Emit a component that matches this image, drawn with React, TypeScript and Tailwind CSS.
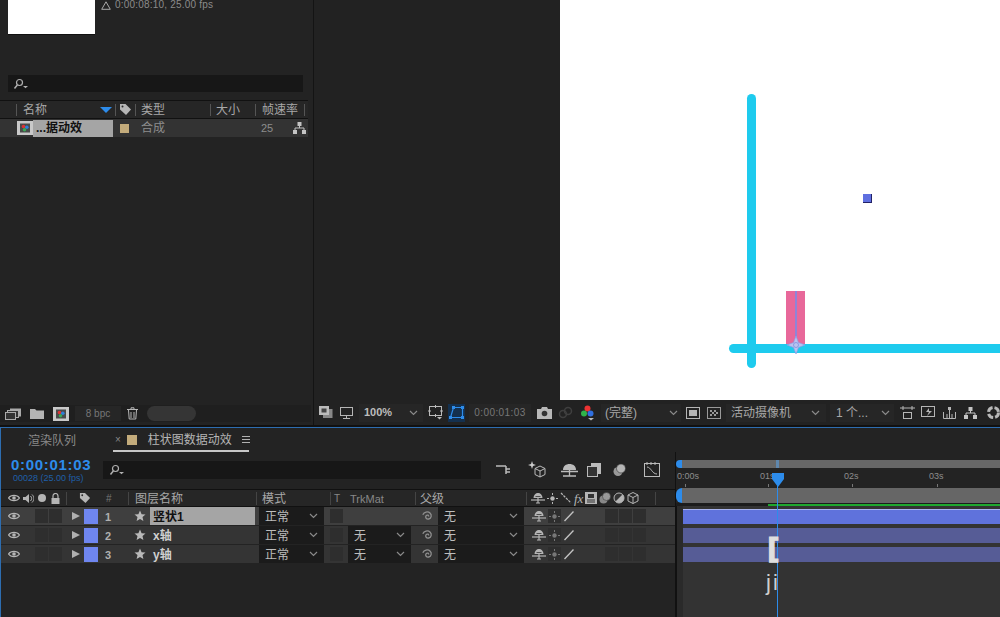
import type { ReactNode } from "react";

const font = "font-['Liberation_Sans','Noto_Sans_CJK_SC',sans-serif]";

function Chevron({ className = "" }: { className?: string }) {
  return (
    <svg width="9" height="6" viewBox="0 0 9 6" className={className}>
      <path d="M1 1l3.5 3.5L8 1" fill="none" stroke="#8a8a8a" strokeWidth="1.2" />
    </svg>
  );
}

function SearchIcon() {
  return (
    <svg width="16" height="12" viewBox="0 0 16 12">
      <circle cx="6.5" cy="4.5" r="3" fill="none" stroke="#b0b0b0" strokeWidth="1.2" />
      <path d="M4.3 7L1.5 10.5" stroke="#b0b0b0" strokeWidth="1.5" />
      <path d="M10 8h5l-2.5 2.2z" fill="#b0b0b0" />
    </svg>
  );
}

function CompIcon() {
  return (
    <svg width="16" height="14" viewBox="0 0 16 14">
      <rect x="0" y="0" width="16" height="14" fill="#c9c9c9" />
      <rect x="3" y="2.500" width="10" height="9" fill="#4a4a4a" />
      <circle cx="6.500" cy="5.500" r="1.800" fill="#d33" />
      <circle cx="9.800" cy="6.200" r="1.800" fill="#2f7fd8" />
      <circle cx="7.500" cy="8.800" r="1.800" fill="#3aa655" />
    </svg>
  );
}

function Eye() {
  return (
    <svg width="12" height="8" viewBox="0 0 12 8">
      <path d="M.5 4C3 .5 9 .5 11.500 4 9 7.500 3 7.500.5 4z" fill="none" stroke="#b5b5b5" strokeWidth="1.200" />
      <circle cx="6" cy="4" r="1.800" fill="#b5b5b5" />
    </svg>
  );
}

function Star() {
  return (
    <svg width="12" height="12" viewBox="0 0 12 12">
      <path d="M6 .5l1.600 3.700 3.900.3-3 2.600.9 3.900L6 8.900l-3.400 2.100.9-3.900-3-2.600 3.900-.3z" fill="#b9b9b9" />
    </svg>
  );
}

function Spiral() {
  return (
    <svg width="14" height="14" viewBox="0 0 14 14">
      <path d="M7.500 7.500c.8-1.200-1.500-2-2.500-.6-1.100 1.600.6 3.600 2.700 3.100 2.700-.6 3.300-4 1.500-5.800C6.900 2 3 2.800 1.800 5.800" fill="none" stroke="#8f8f8f" strokeWidth="1.300" />
    </svg>
  );
}

function Shy() {
  return (
    <svg width="14" height="12" viewBox="0 0 14 12">
      <path d="M2.500 6C2.500 3 4.500 1 7 1s4.500 2 4.500 5z" fill="#b5b5b5" />
      <path d="M0 8h14" stroke="#b5b5b5" strokeWidth="1.200" />
      <path d="M7 1v10M5 11h4" stroke="#b5b5b5" strokeWidth="1.200" />
      <path d="M4.500 4.500h5" stroke="#333" strokeWidth=".8" />
    </svg>
  );
}

function Sun({ color = "#777" }: { color?: string }) {
  return (
    <svg width="11" height="11" viewBox="0 0 11 11">
      <circle cx="5.500" cy="5.500" r="2.200" fill={color} />
      <path d="M5.500 0v2M5.500 9v2M0 5.500h2M9 5.500h2" stroke={color} strokeWidth="1" />
    </svg>
  );
}

function Slash() {
  return (
    <svg width="12" height="12" viewBox="0 0 12 12">
      <path d="M1.500 11L10.500 1.500" stroke="#c4c4c4" strokeWidth="1.300" />
    </svg>
  );
}

function Tag({ size = 13 }: { size?: number }) {
  return (
    <svg width={size} height={size} viewBox="0 0 13 13">
      <path d="M1 1h5.500L12 6.500 7 12 1 6.500z" fill="#b5b5b5" />
      <circle cx="3.500" cy="3.500" r="1" fill="#2a2a2a" />
    </svg>
  );
}

function Drop({ w, label, ml = "" }: { w: string; label: string; ml?: string }) {
  return (
    <div className={`${w} ${ml} h-[18px] bg-[#1b1b1b] flex items-center justify-between px-[6px] text-[12px] shrink-0 text-[#bdbdbd]`}>
      <span className="truncate pt-[2px]">{label}</span>
      <Chevron />
    </div>
  );
}

function Cell({ ml = "" }: { ml?: string }) {
  return <div className={`w-[13px] h-[14px] bg-[#2e2e2e] shrink-0 ${ml}`} />;
}

function ProjectPanel() {
  return (
    <div className="w-[311px] shrink-0 flex flex-col bg-[#232323]">
      <div className="h-[36px] flex pl-[8px]">
        <div className="w-[87px] h-[35px] bg-white border-b border-[#111]" />
        <div className="ml-[6px] flex items-center h-[10px] gap-[4px] text-[10px] leading-[10px] text-[#8b8b8b]">
          <svg width="10" height="9" viewBox="0 0 10 9">
            <path d="M5 .8L9.300 8.300H.7z" fill="none" stroke="#aaa" strokeWidth="1" />
          </svg>
          <span className="tracking-[0.2px]">0:00:08:10, 25.00 fps</span>
        </div>
      </div>
      <div className="mt-[39px] mx-[8px] h-[17px] bg-[#171717] flex items-center pl-[5px]">
        <SearchIcon />
      </div>
      <div className="mt-[8px] mr-[3px] h-[19px] border-t border-[#111] border-b flex items-center text-[12px] text-[#a8a8a8] bg-[#262626]">
        <div className="ml-[16px] h-[12px] w-[100px] border-l border-r border-[#555] pl-[6px] pr-[3px] flex items-center justify-between leading-none">
          <span>名称</span>
          <svg width="12" height="6" viewBox="0 0 12 6">
            <path d="M0 0h12L6 6z" fill="#2d8ceb" />
          </svg>
        </div>
        <div className="w-[19px] flex justify-center">
          <Tag />
        </div>
        <div className="h-[12px] w-[76px] border-l border-r border-[#555] pl-[5px] leading-none flex items-center">类型</div>
        <div className="h-[12px] w-[45px] border-r border-[#555] pl-[5px] leading-none flex items-center">大小</div>
        <div className="h-[12px] w-[49px] border-r border-[#555] pl-[6px] leading-none flex items-center">帧速率</div>
      </div>
      <div className="h-[18px] mr-[3px] flex items-center bg-[#333] text-[11px] text-[#8d8d8d]">
        <div className="ml-[17px]">
          <CompIcon />
        </div>
        <div className="w-[80px] h-[17px] bg-[#a5a5a5] text-[#111] font-bold text-[12px] pl-[3px] leading-[17px]">...据动效</div>
        <div className="ml-[7px] w-[9px] h-[9px] bg-[#c3ab7b]" />
        <div className="ml-[12px] w-[120px] text-[12px]">合成</div>
        <div className="w-[32px]">25</div>
        <svg width="13" height="12" viewBox="0 0 13 12">
          <path d="M4.500 0h4v4h-4zM0 8h4v4H0zM9 8h4v4H9z" fill="#c4c4c4" />
          <path d="M6.500 4v2M2 8V6h9v2" stroke="#c4c4c4" fill="none" />
        </svg>
      </div>
      <div className="flex-1" />
      <div className="h-[17px] mb-[3px] flex items-center pl-[5px] bg-[#1f1f1f] text-[#777]">
        <svg width="17" height="12" viewBox="0 0 17 12">
          <rect x="5" y="0.500" width="11" height="8" fill="#aaa" />
          <rect x="2.500" y="2.500" width="11" height="7" fill="#333" stroke="#aaa" />
          <rect x="0.500" y="4.500" width="10" height="7" fill="#333" stroke="#aaa" />
        </svg>
        <svg width="15" height="11" viewBox="0 0 15 11" className="ml-[8px]">
          <path d="M0 1h5l1.500 1.500H14V11H0z" fill="#b3b3b3" />
        </svg>
        <div className="ml-[8px]">
          <CompIcon />
        </div>
        <div className="ml-[6px] w-[46px] h-[15px] bg-[#262626] text-[10px] leading-[15px] text-center">8 bpc</div>
        <svg width="11" height="13" viewBox="0 0 11 13" className="ml-[6px]">
          <path d="M0 2.500h11M4 2.500V.8h3v1.700M1.500 3l.7 9h6.600l.7-9M4 5v6M7 5v6" fill="none" stroke="#b8b8b8" />
        </svg>
        <div className="ml-[9px] w-[49px] h-[15px] rounded-full bg-[#353535]" />
      </div>
    </div>
  );
}

function Viewer() {
  return (
    <div className="flex-1 ml-[2px] flex flex-col border-l border-[#141414] bg-[#232323]">
      <div className="h-[400px] flex">
        <div className="w-[246px] bg-[#222222]" />
        <div className="flex-1 bg-white relative overflow-hidden">
          <div className="absolute left-[187px] top-[94px] w-[9px] h-[274px] rounded-full bg-[#1ecbee]" />
          <div className="absolute left-[226px] top-[291px] w-[19px] h-[56px] bg-[#e8689a]" />
          <div className="absolute left-[169px] top-[344px] w-[300px] h-[9px] rounded-full bg-[#1ecbee]" />
          <div className="absolute left-[235px] top-[291px] w-[2px] h-[50px] bg-[#8f84d8]" />
          <svg width="18" height="18" viewBox="0 0 18 18" className="absolute left-[227px] top-[336px]">
            <path d="M9 0L11.500 6.500 18 9l-6.500 2.500L9 18l-2.500-6.500L0 9l6.500-2.500z" fill="#b9c4f0" stroke="#8c9be4" strokeWidth=".7" />
            <circle cx="9" cy="9" r="2.500" fill="none" stroke="#7f8fe0" strokeWidth=".8" />
          </svg>
          <div className="absolute left-[303px] top-[194px] w-[9px] h-[9px] bg-[#5f6fe0] border-b border-r border-[#222266]" />
        </div>
      </div>
      <div className="h-[25px] flex items-center text-[11px] text-[#8e8e8e] bg-[#222222]">
        <svg width="14" height="13" viewBox="0 0 14 13" className="ml-[5px]">
          <rect x="4" y="3" width="9.500" height="9" fill="#888" />
          <rect x="0.500" y="0.500" width="9" height="8" fill="#bbb" stroke="#bbb" />
          <rect x="2.500" y="2.500" width="5" height="4" fill="#444" />
        </svg>
        <svg width="13" height="12" viewBox="0 0 13 12" className="ml-[7px]">
          <rect x="0.500" y="0.500" width="12" height="8" fill="none" stroke="#b5b5b5" />
          <path d="M6.500 9v2M3 11.500h7" stroke="#b5b5b5" />
        </svg>
        <div className="ml-[6px] w-[64px] h-[18px] bg-[#262626] flex items-center justify-between px-[5px] text-[#bdbdbd] font-bold">
          <span>100%</span>
          <Chevron />
        </div>
        <svg width="15" height="15" viewBox="0 0 15 15" className="ml-[5px]">
          <rect x="1.500" y="1.500" width="12" height="9" fill="none" stroke="#bbb" />
          <path d="M7.500 0v3M7.500 9v3M0 6h3M12 6h3" stroke="#bbb" />
          <path d="M9 12h5l-2.500 2.500z" fill="#bbb" />
        </svg>
        <div className="ml-[5px] w-[17px] h-[18px] bg-[#14304e] flex items-center justify-center">
          <svg width="15" height="14" viewBox="0 0 15 14">
            <path d="M4.500 1.500h9v10h-12z" fill="none" stroke="#2d8ceb" strokeWidth="1.200" />
            <path d="M3 0h3v3H3zM12 0h3v3h-3zM0 10h3v3H0zM12 10h3v3h-3z" fill="#2d8ceb" />
          </svg>
        </div>
        <div className="ml-[4px] w-[62px] h-[18px] bg-[#262626] flex items-center justify-center text-[10px] tracking-[0.4px] text-[#777]">0:00:01:03</div>
        <svg width="15" height="12" viewBox="0 0 15 12" className="ml-[6px]">
          <path d="M0 2h4l1-2h5l1 2h4v10H0z" fill="#b8b8b8" />
          <circle cx="7.500" cy="6.500" r="2.800" fill="#333" />
        </svg>
        <svg width="15" height="14" viewBox="0 0 15 14" className="ml-[6px]">
          <circle cx="5" cy="8" r="3.500" fill="none" stroke="#3f3f3f" strokeWidth="1.500" />
          <circle cx="10" cy="5" r="3.500" fill="none" stroke="#3f3f3f" strokeWidth="1.500" />
        </svg>
        <svg width="15" height="16" viewBox="0 0 15 16" className="ml-[7px]">
          <circle cx="7.500" cy="3.500" r="3" fill="#e33" />
          <circle cx="4" cy="8.500" r="3" fill="#2fb34a" />
          <circle cx="10.500" cy="8.500" r="3" fill="#2f6fe0" />
          <path d="M8 13h6l-3 2.500z" fill="#bbb" />
        </svg>
        <div className="ml-[6px] w-[80px] h-[18px] bg-[#262626] flex items-center justify-between px-[4px] pr-[3px] text-[12px] text-[#a8a8a8]">
          <span>(完整)</span>
          <Chevron />
        </div>
        <svg width="14" height="12" viewBox="0 0 14 12" className="ml-[5px]">
          <rect x="0.500" y="0.500" width="13" height="11" fill="none" stroke="#b5b5b5" />
          <rect x="3" y="3" width="8" height="6" fill="#b5b5b5" />
        </svg>
        <svg width="14" height="12" viewBox="0 0 14 12" className="ml-[7px]">
          <rect x="0.500" y="0.500" width="13" height="11" fill="none" stroke="#999" />
          <path d="M3 3h2v2H3zM7 3h2v2H7zM5 5h2v2H5zM9 5h2v2H9zM3 7h2v2H3zM7 7h2v2H7z" fill="#999" />
        </svg>
        <div className="ml-[5px] w-[100px] h-[18px] bg-[#262626] flex items-center justify-between pl-[5px] pr-[6px] text-[12px] text-[#a8a8a8]">
          <span>活动摄像机</span>
          <Chevron />
        </div>
        <div className="ml-[4px] w-[64px] h-[18px] bg-[#262626] flex items-center justify-between pl-[6px] pr-[4px] text-[12px] text-[#a8a8a8]">
          <span>1 个...</span>
          <Chevron />
        </div>
        <svg width="15" height="13" viewBox="0 0 15 13" className="ml-[6px]">
          <path d="M0 2h15M3 0v4M12 0v4" stroke="#b5b5b5" />
          <rect x="3.500" y="6.500" width="8" height="6" fill="none" stroke="#b5b5b5" />
        </svg>
        <svg width="14" height="13" viewBox="0 0 14 13" className="ml-[6px]">
          <rect x="0.500" y="0.500" width="13" height="10" fill="none" stroke="#b5b5b5" />
          <path d="M8 2L5 6h3l-2 4 5-5H8z" fill="#b5b5b5" />
        </svg>
        <svg width="13" height="12" viewBox="0 0 13 12" className="ml-[8px]">
          <path d="M.5 5v6.500h12V5M4 11V7M6.500 11V3M9 11V7" fill="none" stroke="#b5b5b5" />
          <rect x="5" y="0" width="3" height="3" fill="#b5b5b5" />
        </svg>
        <svg width="13" height="12" viewBox="0 0 13 12" className="ml-[8px]">
          <path d="M4.500 0h4v4h-4zM0 8h4v4H0zM9 8h4v4H9z" fill="#c4c4c4" />
          <path d="M6.500 4v2M2 8V6h9v2" stroke="#c4c4c4" fill="none" />
        </svg>
        <svg width="15" height="15" viewBox="0 0 15 15" className="ml-[9px] shrink-0">
          <circle cx="7.500" cy="7.500" r="5" fill="none" stroke="#b8b8b8" strokeWidth="3" strokeDasharray="6 2" />
        </svg>
      </div>
    </div>
  );
}

const HeadSep = ({ w, children, pl = "pl-[5px]" }: { w: string; children?: ReactNode; pl?: string }) => (
  <div className={`${w} ${pl} pt-[2px] h-[13px] border-r border-[#444] flex items-center shrink-0 leading-none`}>{children}</div>
);

function LayerRow({ n, name, selected }: { n: number; name: string; selected?: boolean }) {
  return (
    <div className={`h-[18px] mb-px flex items-center text-[12px] text-[#c4c4c4] ${selected ? "bg-[#3f3f3f]" : "bg-[#343434]"}`}>
      <div className="ml-[7px] w-[14px] flex items-center">
        <Eye />
      </div>
      <Cell ml="ml-[13px]" />
      <Cell ml="ml-px" />
      <svg width="8" height="8" viewBox="0 0 8 8" className="ml-[10px]">
        <path d="M0 0l8 4-8 4z" fill="#b0b0b0" />
      </svg>
      <div className="ml-[4px] w-[14px] h-[15px] bg-[#6f86f0]" />
      <div className="w-[36px] pl-[7px] pt-[2px] font-bold text-[11px] text-[#b0b0b0]">{n}</div>
      <Star />
      <div className={`ml-[4px] w-[105px] h-[18px] pl-[3px] leading-[20px] font-bold ${selected ? "bg-[#a5a5a5] text-[#111]" : "text-[#cfcfcf]"}`}>{name}</div>
      <Drop w="w-[65px]" label="正常" ml="ml-[4px]" />
      <Cell ml="ml-[6px]" />
      {selected ? <div className="w-[68px] shrink-0" /> : <Drop w="w-[63px]" label="无" ml="ml-[5px]" />}
      <div className="ml-[10px] w-[14px] flex">
        <Spiral />
      </div>
      <Drop w="w-[86px]" label="无" ml="ml-[3px]" />
      <div className="ml-[8px] w-[14px] flex">
        <Shy />
      </div>
      <div className="ml-[2px] w-[13px] h-[14px] bg-[#2e2e2e] flex items-center justify-center">
        <Sun />
      </div>
      <div className="ml-[2px] w-[13px] flex">
        <Slash />
      </div>
      <Cell ml="ml-[29px]" />
      <Cell ml="ml-px" />
      <Cell ml="ml-px" />
    </div>
  );
}

function LayerPanel() {
  return (
    <div className="w-[675px] shrink-0 flex flex-col border-r border-[#111]">
      <div className="h-[35px] flex items-start">
        <div className="pl-[10px] pt-[4px] w-[102px] shrink-0">
          <div className="text-[15px] leading-[17px] font-bold text-[#2d8ceb] tracking-[0.7px]">0:00:01:03</div>
          <div className="text-[9px] leading-[10px] text-[#1f5fa8] pl-[2px]">00028 (25.00 fps)</div>
        </div>
        <div className="mt-[9px] w-[378px] h-[18px] bg-[#171717] flex items-center pl-[6px]">
          <SearchIcon />
        </div>
        <div className="mt-[9px] flex items-center">
          <svg width="16" height="14" viewBox="0 0 16 14" className="ml-[15px]">
            <path d="M0 3h6M5 3h5M10 3v8M10 6h4M10 9h4" stroke="#bbb" strokeWidth="1.500" fill="none" />
          </svg>
          <svg width="18" height="17" viewBox="0 0 18 17" className="ml-[16px]">
            <path d="M4 0l1 3 3 1-3 1-1 3-1-3-3-1 3-1z" fill="#ccc" />
            <path d="M12 5l5 2.500v6L12 16l-5-2.500v-6zM7 7.500l5 2.500 5-2.500M12 10v6" fill="none" stroke="#bbb" />
          </svg>
          <svg width="17" height="14" viewBox="0 0 17 14" className="ml-[15px]">
            <path d="M2 7C2 3 5 1 8.500 1S15 3 15 7z" fill="#bbb" />
            <path d="M0 8.500h17M8.500 1v12M2 13h13" stroke="#bbb" strokeWidth="1.300" />
          </svg>
          <svg width="14" height="14" viewBox="0 0 14 14" className="ml-[9px]">
            <rect x="4" y="0" width="10" height="11" fill="#bbb" />
            <rect x="0.500" y="3.500" width="10" height="10" fill="#333" stroke="#bbb" />
          </svg>
          <svg width="15" height="14" viewBox="0 0 15 14" className="ml-[11px]">
            <circle cx="6" cy="8.500" r="4.500" fill="#999" />
            <circle cx="9" cy="5.500" r="4.500" fill="#b5b5b5" stroke="#333" strokeWidth=".6" />
          </svg>
          <svg width="16" height="15" viewBox="0 0 16 15" className="ml-[17px]">
            <rect x="0.500" y="1.500" width="15" height="13" fill="none" stroke="#bbb" />
            <path d="M3 5c4 0 5 7 10 7M3 0v3M7 0v3M11 0v3" fill="none" stroke="#bbb" />
          </svg>
        </div>
      </div>
      <div className="mt-[2px] h-[18px] border-t border-b border-[#111] flex items-center text-[12px] text-[#a8a8a8] bg-[#262626]">
        <div className="pl-[7px] flex items-center gap-[3px] w-[66px] h-[13px] border-r border-[#444] shrink-0">
          <Eye />
          <svg width="11" height="11" viewBox="0 0 11 11">
            <path d="M0 4h2.500L6 1v9L2.500 7H0z" fill="#b5b5b5" />
            <path d="M7.500 3c1.500 1.500 1.500 3.500 0 5M9 1.500c2.500 2.500 2.500 5.500 0 8" fill="none" stroke="#b5b5b5" />
          </svg>
          <div className="w-[8px] h-[8px] rounded-full bg-[#b5b5b5] ml-[1px]" />
          <svg width="9" height="11" viewBox="0 0 9 11" className="ml-[2px]">
            <path d="M2 5V3a2.500 2.500 0 015 0v2" fill="none" stroke="#b5b5b5" strokeWidth="1.200" />
            <rect x="0.500" y="5" width="8" height="6" fill="#b5b5b5" />
          </svg>
        </div>
        <div className="w-[31px] pl-[12px] shrink-0 flex">
          <Tag size={12} />
        </div>
        <HeadSep w="w-[31px]" pl="pl-[8px]">
          <span className="text-[10px] text-[#777]">#</span>
        </HeadSep>
        <HeadSep w="w-[128px]" pl="pl-[6px]">图层名称</HeadSep>
        <HeadSep w="w-[74px]" pl="pl-[5px]">模式</HeadSep>
        <div className="w-[14px] pl-[3px] text-[10px] text-[#888] shrink-0">T</div>
        <HeadSep w="w-[71px]" pl="pl-[5px]">
          <span className="text-[11px] text-[#888]">TrkMat</span>
        </HeadSep>
        <HeadSep w="w-[111px]" pl="pl-[4px]">父级</HeadSep>
        <div className="pl-[4px] flex items-center gap-[2px] shrink-0">
          <Shy />
          <Sun color="#b5b5b5" />
          <svg width="12" height="12" viewBox="0 0 12 12">
            <path d="M1 1l10 10" stroke="#b5b5b5" strokeWidth="1.200" strokeDasharray="2.500 1" />
          </svg>
          <span className="italic font-['Liberation_Serif',serif] text-[13px] leading-none text-[#b5b5b5]">fx</span>
          <svg width="12" height="12" viewBox="0 0 12 12">
            <rect width="12" height="12" fill="#b5b5b5" />
            <rect x="3" y="2" width="6" height="4" fill="#333" />
            <path d="M2 8h8M2 10h8" stroke="#333" />
          </svg>
          <svg width="12" height="12" viewBox="0 0 12 12">
            <circle cx="4.500" cy="7.500" r="4" fill="#888" />
            <circle cx="7.500" cy="4.500" r="4" fill="#999" stroke="#333" strokeWidth=".5" />
          </svg>
          <svg width="12" height="12" viewBox="0 0 12 12">
            <circle cx="6" cy="6" r="5" fill="#333" stroke="#b5b5b5" />
            <path d="M6 1a5 5 0 010 10z" fill="#b5b5b5" transform="rotate(45 6 6)" />
          </svg>
          <svg width="12" height="12" viewBox="0 0 12 12">
            <path d="M6 .5l5 2.500v6L6 11.500 1 9V3zM1 3l5 2.500L11 3M6 5.500v6" fill="none" stroke="#b5b5b5" />
          </svg>
          <div className="ml-[14px] w-px h-[13px] bg-[#444]" />
        </div>
      </div>
      <LayerRow n={1} name="竖状1" selected />
      <LayerRow n={2} name="x轴" />
      <LayerRow n={3} name="y轴" />
      <div className="flex-1" />
    </div>
  );
}

function TimelinePanel() {
  return (
    <div className="flex-1 flex flex-col relative overflow-hidden">
      <div className="h-[16px] pt-[8px] flex">
        <div className="w-[6px] h-[8px] bg-[#2d8ceb] rounded-l-full" />
        <div className="flex-1 h-[8px] bg-[#676767] relative">
          <div className="absolute left-[94px] top-0 w-[3px] h-[8px] bg-[#5f87ad]" />
        </div>
      </div>
      <div className="h-[20px] flex items-start text-[9px] leading-[11px] text-[#8e8e8e] pt-[3px]">
        {[
          ["0:00s", "w-[84px] pl-[1px]"],
          ["01s", "w-[84px] pl-0"],
          ["02s", "w-[85px] pl-0"],
          ["03s", "w-[60px] pl-0"],
        ].map(([label, cls]) => (
          <div key={label} className={`${cls} shrink-0`}>
            <div>{label}</div>
            <div className="ml-[8px] mt-[2px] w-px h-[3px] bg-[#777]" />
          </div>
        ))}
      </div>
      <div className="h-[15px] flex">
        <div className="w-[6px] bg-[#2d8ceb] rounded-l-full" />
        <div className="flex-1 bg-[#666]" />
      </div>
      <div className="h-[3px] bg-[#1c1c1c] flex items-center">
        <div className="ml-[92px] flex-1 h-[2px] bg-[#1fa82e]" />
      </div>
      <div className="flex-1 flex bg-[#333333]">
        <div className="w-[7px] bg-[#2a2a2a] border-l border-[#111]" />
        <div className="flex-1 pt-[3px]">
          <div className="h-[15px] border-t border-[#a9b4ee] bg-[#5f72dc]" />
          <div className="mt-[4px] h-[15px] bg-[#565c96]" />
          <div className="mt-[4px] h-[15px] bg-[#565c96]" />
        </div>
      </div>

      {/* playhead and the stray input marks sitting over the bars */}
      <div className="absolute left-[101px] top-[21px] w-px h-[170px] bg-[#2d8ceb]" />
      <svg width="12" height="14" viewBox="0 0 12 14" className="absolute left-[96px] top-[21px]">
        <path d="M0 0h12v6l-6 8-6-8z" fill="#2d8ceb" />
      </svg>
      <div className="absolute left-[91px] top-[82px] font-['DejaVu_Sans',sans-serif] font-bold text-[28px] leading-[32px] text-[#dedede] [-webkit-text-stroke:1px_#dedede]">[</div>
      <div className="absolute left-[90px] top-[118px] text-[22px] leading-[26px] tracking-[2px] text-[#cfcfcf]">ji</div>
    </div>
  );
}

export default function App() {
  return (
    <div className={`w-[1000px] h-[617px] overflow-hidden flex flex-col bg-[#232323] ${font}`}>
      <div className="h-[425px] flex">
        <ProjectPanel />
        <Viewer />
      </div>
      <div className="h-[2px] bg-[#111]" />
      <div className="flex-1 flex flex-col border-t border-[#2d6db0] border-l">
        <div className="h-[24px] flex items-end text-[12px] text-[#8a8a8a]">
          <div className="ml-[27px] w-[85px] h-full flex items-center pt-[1px]">渲染队列</div>
          <div className="w-[136px] h-full border-b-2 border-[#c8c8c8] flex items-center pl-[2px] whitespace-nowrap pt-[1px]">
            <span className="text-[10px] text-[#888]">×</span>
            <div className="ml-[6px] w-[10px] h-[10px] bg-[#c3ab7b] shrink-0" />
            <span className="ml-[11px] text-[#b5b5b5]">柱状图数据动效</span>
            <svg width="8" height="7" viewBox="0 0 8 7" className="ml-[10px] shrink-0">
              <path d="M0 .5h8M0 3.500h8M0 6.500h8" stroke="#b0b0b0" />
            </svg>
          </div>
        </div>
        <div className="flex-1 flex">
          <LayerPanel />
          <TimelinePanel />
        </div>
      </div>
    </div>
  );
}
